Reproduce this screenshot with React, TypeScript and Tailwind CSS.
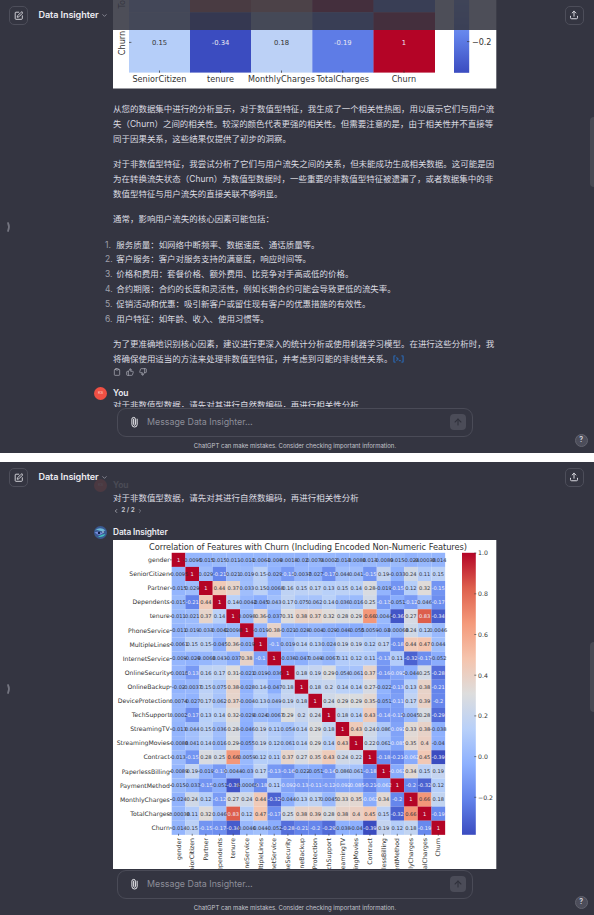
import type { ReactNode } from "react";
import { ArrowUp, ChevronDown, ChevronLeft, ChevronRight, Clipboard, Paperclip, SquarePen, ThumbsDown, ThumbsUp } from "lucide-react";

const FEATURES = [
  "gender", "SeniorCitizen", "Partner", "Dependents", "tenure", "PhoneService", "MultipleLines",
  "InternetService", "OnlineSecurity", "OnlineBackup", "DeviceProtection", "TechSupport", "StreamingTV",
  "StreamingMovies", "Contract", "PaperlessBilling", "PaymentMethod", "MonthlyCharges", "TotalCharges", "Churn",
];

// Upper triangle of the correlation matrix, diagonal included.
const UPPER = [
  "1 -0.0095 -0.015 0.015 0.011 -0.011 -0.0061 -0.009 -0.0018 -0.02 0.0074 0.0002 -0.013 -0.0088 0.013 -0.0089 0.015 -0.024 -0.00038 -0.014",
  "1 0.029 -0.21 0.021 0.019 0.15 -0.029 -0.13 -0.0037 -0.027 -0.17 0.044 0.041 -0.15 0.19 -0.033 0.24 0.11 0.15",
  "1 0.44 0.37 0.033 0.15 -0.0068 0.16 0.15 0.17 0.13 0.15 0.14 0.28 -0.019 -0.15 0.12 0.32 -0.15",
  "1 0.14 -0.0042 -0.045 0.043 0.17 0.075 0.062 0.14 0.036 0.016 0.25 -0.13 -0.051 -0.12 0.046 -0.17",
  "1 0.0098 0.36 -0.037 0.31 0.38 0.37 0.32 0.28 0.29 0.66 0.0044 -0.36 0.27 0.83 -0.34",
  "1 -0.019 0.38 -0.021 -0.028 -0.004 -0.029 -0.046 -0.055 0.0059 -0.03 -0.00068 0.24 0.12 0.0046",
  "1 -0.1 0.019 0.14 0.13 0.024 0.19 0.19 0.12 0.17 -0.18 0.44 0.47 0.044",
  "1 -0.036 -0.047 0.049 -0.0067 0.11 0.12 0.11 -0.13 0.11 -0.32 -0.17 -0.052",
  "1 0.18 0.19 0.29 0.054 0.061 0.37 -0.16 -0.092 -0.044 0.25 -0.28",
  "1 0.18 0.2 0.14 0.14 0.27 -0.022 -0.13 0.13 0.38 -0.21",
  "1 0.24 0.29 0.29 0.35 -0.051 -0.11 0.17 0.39 -0.2",
  "1 0.18 0.14 0.43 -0.14 -0.12 0.0045 0.28 -0.29",
  "1 0.43 0.24 0.086 -0.092 0.33 0.38 -0.038",
  "1 0.22 0.061 -0.085 0.35 0.4 -0.04",
  "1 -0.18 -0.21 -0.062 0.45 -0.39",
  "1 -0.062 0.34 0.15 0.19",
  "1 -0.2 -0.32 0.12",
  "1 0.66 0.18",
  "1 -0.19",
  "1",
].map((row) => row.split(" "));

const valueAt = (r: number, c: number) => (c >= r ? UPPER[r][c - r] : UPPER[c][r - c]);

const STOPS = [
  [59, 76, 192], [98, 130, 234], [141, 176, 254], [184, 208, 249], [221, 221, 221],
  [245, 196, 173], [244, 154, 123], [222, 96, 77], [180, 4, 38],
];

function coolwarm(v: number, min: number) {
  const t = Math.min(1, Math.max(0, (v - min) / (1 - min))) * 8;
  const i = Math.min(7, Math.floor(t));
  const ch = STOPS[i].map((a, k) => Math.round(a + (STOPS[i + 1][k] - a) * (t - i)));
  return `rgb(${ch.join(",")})`;
}

const isLightText = (v: number) => v < -0.058 || v > 0.75;

function Gradient({ id }: { id: string }) {
  return (
    <linearGradient id={id} x1="0" y1="1" x2="0" y2="0">
      {STOPS.map((s, i) => (
        <stop key={i} offset={i / 8} stopColor={`rgb(${s.join(",")})`} />
      ))}
    </linearGradient>
  );
}

const CHART_FONT = "font-['DejaVu_Sans',sans-serif]";

function SmallChart() {
  const cols = [129, 190, 251, 312.3, 373.5];
  const rows = [
    { y: -48, v: [0.1, 0.83, 0.65, 1, -0.2], text: ["", "", "", "", ""] },
    { y: 12.3, v: [0.15, -0.34, 0.18, -0.19, 1], text: ["0.15", "-0.34", "0.18", "-0.19", "1"] },
  ];
  const names = ["SeniorCitizen", "tenure", "MonthlyCharges", "TotalCharges", "Churn"];
  const widths = [54, 27, 67, 52.5, 24.5];
  return (
    <svg className={`block h-[88.5px] w-[384px] ${CHART_FONT}`} viewBox="113 0 384 88.5">
      <defs><Gradient id="barSmall" /></defs>
      <rect x="113" y="0" width="383.3" height="88.5" fill="#fff" />
      {rows.map((row) =>
        row.v.map((v, i) => (
          <g key={`${row.y}-${i}`}>
            <rect x={cols[i]} y={row.y} width="61.5" height="60.3" fill={coolwarm(v, -0.34)} />
            <text x={cols[i] + 30.5} y={44.5} fontSize="6.8" textAnchor="middle" fill={isLightText(v) ? "#e8e8f2" : "#333"}>{row.text[i]}</text>
          </g>
        ))
      )}
      {names.map((n, i) => (
        <g key={n}>
          <path d={`M${cols[i] + 30.5} 70.5v2.3`} stroke="#333" strokeWidth=".7" />
          <text x={cols[i] + 30.4} y="81.7" fontSize="8.1" textAnchor="middle" textLength={widths[i]} fill="#333">{n}</text>
        </g>
      ))}
      <path d="M129 42.4h2.4" stroke="#333" strokeWidth=".7" />
      <text transform="translate(125.3 43) rotate(-90)" fontSize="8.1" textAnchor="middle" textLength="24.5" fill="#333">Churn</text>
      <text transform="translate(125.3 -17.5) rotate(-90)" fontSize="8.1" textAnchor="middle" fill="#333">TotalCharges</text>
      <rect x="454" y="-225" width="15.2" height="297.8" fill="url(#barSmall)" />
      <path d="M467 41.6h2.4" stroke="#333" strokeWidth=".7" />
      <text x="472" y="44.6" fontSize="8.1" textLength="19.5" fill="#333">−0.2</text>
    </svg>
  );
}

function Heatmap() {
  const x0 = 171.7, y0 = 552.8, cw = 13.67, rh = 14.1;
  return (
    <svg className={`block h-[375px] w-[384px] ${CHART_FONT}`} viewBox="113 540 384 375">
      <defs><Gradient id="barLarge" /></defs>
      <rect x="113" y="540" width="383.3" height="375" fill="#fff" />
      <text x="149" y="550" fontSize="8.3" textLength="318" fill="#333">Correlation of Features with Churn (Including Encoded Non-Numeric Features)</text>
      {FEATURES.map((_, r) =>
        FEATURES.map((_, c) => (
          <rect key={`${r}-${c}`} x={x0 + c * cw} y={y0 + r * rh} width={cw + 0.05} height={rh + 0.05} fill={coolwarm(Number(valueAt(r, c)), -0.39)} />
        ))
      )}
      {FEATURES.map((_, r) =>
        FEATURES.map((_, c) => {
          const s = valueAt(r, c);
          return (
            <text key={`${r}-${c}`} x={x0 + (c + 0.5) * cw} y={y0 + (r + 0.5) * rh + 1.9} fontSize="5.1" textAnchor="middle" fill={isLightText(Number(s)) ? "#eeeef8" : "#33343c"}>{s}</text>
          );
        })
      )}
      {FEATURES.map((name, i) => (
        <g key={name}>
          <path d={`M${x0 - 1.7} ${y0 + (i + 0.5) * rh}h1.7M${x0 + (i + 0.5) * cw} ${y0 + 20 * rh - 1}v2`} stroke="#333" strokeWidth=".6" />
          <text x="169.8" y={y0 + (i + 0.5) * rh + 2.2} fontSize="6.15" textAnchor="end" fill="#333">{name}</text>
          <text transform={`translate(${x0 + (i + 0.5) * cw + 2.2} 838) rotate(-90)`} fontSize="6.2" textAnchor="end" fill="#333">{name}</text>
        </g>
      ))}
      <rect x="462" y={y0} width="13.8" height={20 * rh} fill="url(#barLarge)" />
      {["1.0", "0.8", "0.6", "0.4", "0.2", "0.0", "−0.2"].map((t, i) => (
        <g key={t}>
          <path d={`M474.3 ${y0 + 0.3 + i * 40.7}h2`} stroke="#333" strokeWidth=".6" />
          <text x="478" y={y0 + 2.6 + i * 40.7} fontSize="6.2" fill="#333">{t}</text>
        </g>
      ))}
    </svg>
  );
}

function Header() {
  return (
    <header className="absolute inset-x-0 top-0 z-10 flex h-[29.5px] items-center bg-[#343541]/88 pt-px pr-[10px] pl-[8.5px]">
      <button className="flex size-[19.5px] items-center justify-center rounded-[5px] border border-[#4d4e5a] text-[#e4e4e9]">
        <SquarePen size={9.5} strokeWidth={2.2} />
      </button>
      <span className="ml-[10.5px] w-[60px] text-[9.1px] font-semibold tracking-[-0.1px] whitespace-nowrap text-[#ececf1]">Data Insighter</span>
      <ChevronDown className="ml-[2px] text-[#9a9ba6]" size={7} strokeWidth={2.6} />
      <button className="ml-auto flex size-[19.5px] items-center justify-center rounded-[5px] border border-[#4d4e5a] text-[#d9d9e0]">
        <svg className="size-[10px]" viewBox="0 0 20 20" fill="none" stroke="currentColor" strokeWidth="2" strokeLinecap="round" strokeLinejoin="round">
          <path d="M10 12.5V2.5M6.3 6L10 2.3L13.7 6M3 12.5V15.5Q3 17.5 5 17.5H15Q17 17.5 17 15.5V12.5" />
        </svg>
      </button>
    </header>
  );
}

function Composer() {
  return (
    <footer className="absolute inset-x-0 bottom-0 z-10 h-[46px] bg-[#343541] pt-[0.6px]">
      <div className="ml-[117px] flex h-[29.5px] w-[356px] items-center rounded-[9px] border border-[#4a4b57] pr-[6px] pl-[11px]">
        <Paperclip className="-rotate-45 text-[#eeeef2]" size={10.5} strokeWidth={2.1} />
        <span className="ml-[7.5px] pt-px text-[8.85px] text-[#8c8d98]">Message Data Insighter…</span>
        <span className="ml-auto flex size-4 items-center justify-center rounded-[4px] bg-[#4b4c58] text-[#30313c]">
          <ArrowUp size={10} strokeWidth={2.6} />
        </span>
      </div>
      <p className="mt-[2.7px] pr-[4px] text-center text-[6px] leading-[12px] text-[#c3c4cd]">ChatGPT can make mistakes. Consider checking important information.</p>
      <span className="absolute top-[26.5px] right-[6px] flex size-[13.5px] items-center justify-center rounded-full border border-[#62636e] bg-[#4c4d5a] text-[7px] font-semibold text-[#d9d9e0]">?</span>
    </footer>
  );
}

function Panel({ children, thumb }: { children: ReactNode; thumb: ReactNode }) {
  return (
    <section className="relative h-[453px] overflow-hidden bg-[#343541]">
      <Header />
      <main>{children}</main>
      <Composer />
      <svg className="absolute top-[221px] left-[6px] h-[12px] w-[5px] text-[#747580]" viewBox="0 0 5 12" fill="none" stroke="currentColor" strokeWidth="1.7" strokeLinecap="round">
        <path d="M2 2Q4 6 2 10" />
      </svg>
      {thumb}
    </section>
  );
}

function Lines({ lines }: { lines: string[] }) {
  return (
    <p className="mb-[10.7px] whitespace-nowrap">
      {lines.map((l) => <span key={l} className="block">{l}</span>)}
    </p>
  );
}

function UserAvatar() {
  return <span className="flex size-[13px] items-center justify-center rounded-full bg-[#ef5044] text-[4px] text-[#ffd5cf]">KS</span>;
}

const FACTORS = [
  "服务质量：如网络中断频率、数据速度、通话质量等。",
  "客户服务：客户对服务支持的满意度，响应时间等。",
  "价格和费用：套餐价格、额外费用、比竞争对手高或低的价格。",
  "合约期限：合约的长度和灵活性，例如长期合约可能会导致更低的流失率。",
  "促销活动和优惠：吸引新客户或留住现有客户的优惠措施的有效性。",
  "用户特征：如年龄、收入、使用习惯等。",
];

const QUESTION = "对于非数值型数据，请先对其进行自然数编码，再进行相关性分析";

export default function App() {
  return (
    <div lang="zh-CN" className="flex h-[915px] w-[594px] flex-col gap-[9px] overflow-hidden bg-white font-['Inter','Noto_Sans_CJK_SC',sans-serif] text-[8.48px] leading-[14.82px] text-[#dcdce2] [text-spacing-trim:space-all]">
      <Panel thumb={<span className="absolute top-[117px] right-0 h-[70px] w-[4px] rounded-l-full bg-[#484953]" />}>
        <div className="pl-[113px]">
          <SmallChart />
          <div className="pt-[13.4px]">
            <Lines lines={[
              "从您的数据集中进行的分析显示，对于数值型特征，我生成了一个相关性热图，用以展示它们与用户流",
              "失（Churn）之间的相关性。较深的颜色代表更强的相关性。但需要注意的是，由于相关性并不直接等",
              "同于因果关系，这些结果仅提供了初步的洞察。",
            ]} />
            <Lines lines={[
              "对于非数值型特征，我尝试分析了它们与用户流失之间的关系，但未能成功生成相关数据。这可能是因",
              "为在转换流失状态（Churn）为数值型数据时，一些重要的非数值型特征被遗漏了，或者数据集中的非",
              "数值型特征与用户流失的直接关联不够明显。",
            ]} />
            <Lines lines={["通常，影响用户流失的核心因素可能包括："]} />
            <ol className="mb-[10.6px] -ml-[8px]">
              {FACTORS.map((f, i) => (
                <li key={f} className="flex whitespace-nowrap">
                  <span className="w-[11.3px] text-[#a0a1ac]">{i + 1}.</span>
                  {f}
                </li>
              ))}
            </ol>
            <p className="whitespace-nowrap">
              为了更准确地识别核心因素，建议进行更深入的统计分析或使用机器学习模型。在进行这些分析时，我
              <br />
              将确保使用适当的方法来处理非数值型特征，并考虑到可能的非线性关系。
              <svg className="ml-[1px] inline-block h-[8px] w-[11px] align-[-1.2px] text-[#2b62a6]" viewBox="0 0 11 8" fill="none" stroke="currentColor" strokeWidth="1.3">
                <path d="M2.6.8H1.6Q.9.8.9 1.5V6.5Q.9 7.2 1.6 7.2H2.6M8.4.8H9.4Q10.1.8 10.1 1.5V6.5Q10.1 7.2 9.4 7.2H8.4M3.4 2.4L5 4L3.4 5.6M5.8 5.6H7.8" />
              </svg>
            </p>
          </div>
          <div className="mt-[1.4px] flex gap-[5px] text-[#b4b5c0]">
            <Clipboard size={8} strokeWidth={2} />
            <ThumbsUp size={8} strokeWidth={2} />
            <ThumbsDown size={8} strokeWidth={2} />
          </div>
          <div className="mt-[11.2px] -ml-[19px] flex h-[13px] items-center gap-[6px]">
            <UserAvatar />
            <span className="font-semibold text-[#ececf1]">You</span>
          </div>
          <p className="-mt-[2px]">{QUESTION}</p>
        </div>
      </Panel>
      <Panel thumb={<span className="absolute top-[180px] right-0 h-[70px] w-[4px] rounded-l-full bg-[#484953]" />}>
        <div className="pt-[17px] pl-[113px]">
          <div className="-ml-[19px] flex h-[13px] items-center gap-[6px]">
            <UserAvatar />
            <span className="font-semibold text-[#ececf1]">You</span>
          </div>
          <p className="-mt-[1.5px]">{QUESTION}</p>
          <div className="flex h-[10px] items-center gap-[1.5px] pt-px text-[6.4px] font-semibold text-[#c9cad2]">
            <ChevronLeft size={6} strokeWidth={2.6} />
            <span className="w-[15px] text-center whitespace-nowrap">2 / 2</span>
            <ChevronRight className="text-[#8b8c97]" size={6} strokeWidth={2.6} />
          </div>
          <div className="mt-[10.5px] -ml-[19px] flex h-[13px] items-center gap-[6px]">
            <svg className="size-[13px]" viewBox="0 0 13 13">
              <circle cx="6.5" cy="6.5" r="6.5" fill="#3a5a92" />
              <path d="M1 4.5Q6 0 11.5 4.5L8 5.2 3 4z" fill="#6fb9d7" />
              <path d="M.6 6.4Q5 4.8 9 7.6L5 9.2z" fill="#7a8ee0" />
              <path d="M4 10.8Q9 11.8 11.5 8L8 8.7z" fill="#43c0bd" />
              <circle cx="5" cy="7" r="1.2" fill="#101c43" />
              <circle cx="9" cy="6" r=".8" fill="#d6effa" />
            </svg>
            <span className="text-[8.3px] font-semibold tracking-[-0.1px] text-[#ececf1]">Data Insighter</span>
          </div>
          <div className="mt-[1px]"><Heatmap /></div>
        </div>
      </Panel>
    </div>
  );
}
